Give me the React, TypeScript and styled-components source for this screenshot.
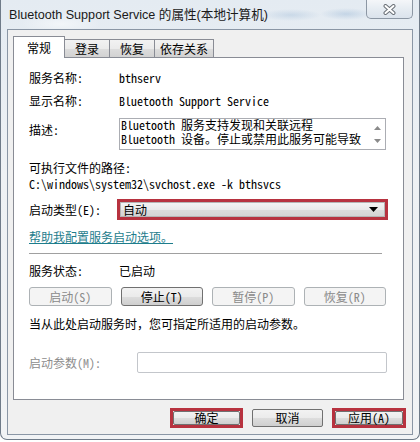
import styled, { createGlobalStyle } from 'styled-components';

const UI_FONT = `"Noto Sans Mono CJK SC", "Noto Sans CJK SC", "Liberation Mono", monospace`;
const TITLE_FONT = `"Liberation Sans", "Noto Sans CJK SC", sans-serif`;
const RED = '#b7323f';

const GlobalStyle = createGlobalStyle`
  html, body {
    margin: 0;
    padding: 0;
    background: #ffffff;
  }
  body {
    font-family: ${UI_FONT};
    font-size: 12px;
    color: #000;
  }
`;

export default function App() {
  return (
    <>
      <GlobalStyle />
      <Window>
        <TitleBar>
          <Title>Bluetooth Support Service 的属性(本地计算机)</Title>
          <CloseButton>
            <svg width="13" height="11" viewBox="0 0 13 11">
              <path d="M2.5 2 L10.5 9 M10.5 2 L2.5 9" stroke="#6b7178" strokeWidth="4" strokeLinecap="round" />
              <path d="M2.5 2 L10.5 9 M10.5 2 L2.5 9" stroke="#ffffff" strokeWidth="2" strokeLinecap="round" />
            </svg>
          </CloseButton>
        </TitleBar>

        <Client>
          <TabRow>
            <Tab $active>常规</Tab>
            <Tab>登录</Tab>
            <Tab>恢复</Tab>
            <Tab>依存关系</Tab>
          </TabRow>

          <Panel>
            <Row>
              <Label>服务名称:</Label>
              <span>bthserv</span>
            </Row>
            <Row $gap={7}>
              <Label>显示名称:</Label>
              <span>Bluetooth Support Service</span>
            </Row>
            <DescRow>
              <Label $top={4}>描述:</Label>
              <DescBox>
                <DescText>
                  <div>Bluetooth 服务支持发现和关联远程</div>
                  <div>Bluetooth 设备。停止或禁用此服务可能导致</div>
                </DescText>
                <ScrollBar>
                  <Arrow viewBox="0 0 7 4" width="7" height="4">
                    <path d="M0 4 L3.5 0 L7 4 Z" fill="#8a8a8a" />
                  </Arrow>
                  <Arrow viewBox="0 0 7 4" width="7" height="4">
                    <path d="M0 0 L7 0 L3.5 4 Z" fill="#8a8a8a" />
                  </Arrow>
                </ScrollBar>
              </DescBox>
            </DescRow>
            <Line $gap={10}>可执行文件的路径:</Line>
            <Line>C:\windows\system32\svchost.exe -k bthsvcs</Line>
            <Row $gap={7}>
              <Label $w={88}>启动类型(E):</Label>
              <SelectFrame>
                <Select>
                  <span>自动</span>
                  <svg width="9" height="5" viewBox="0 0 9 5">
                    <path d="M0 0 L9 0 L4.5 5 Z" fill="#000" />
                  </svg>
                </Select>
              </SelectFrame>
            </Row>
            <HelpLink href="#">帮助我配置服务启动选项。</HelpLink>
            <Separator />
            <Row $gap={9}>
              <Label>服务状态:</Label>
              <span>已启动</span>
            </Row>
            <ServiceButtons>
              <PanelButton disabled>启动(S)</PanelButton>
              <PanelButton>停止(T)</PanelButton>
              <PanelButton disabled>暂停(P)</PanelButton>
              <PanelButton disabled>恢复(R)</PanelButton>
            </ServiceButtons>
            <Line $gap={10}>当从此处启动服务时，您可指定所适用的启动参数。</Line>
            <Row $gap={20}>
              <Label $w={108} $disabled>启动参数(M):</Label>
              <ParamInput />
            </Row>
          </Panel>

          <Footer>
            <Highlight>
              <FooterButton $w={67} $h={14}>确定</FooterButton>
            </Highlight>
            <FooterButton $w={71} $h={18}>取消</FooterButton>
            <Highlight>
              <FooterButton $w={68} $h={14}>应用(A)</FooterButton>
            </Highlight>
          </Footer>
        </Client>
      </Window>
    </>
  );
}

const Window = styled.div`
  box-sizing: border-box;
  width: 420px;
  height: 440px;
  border: 1px solid #6f7b89;
  border-top: none;
  border-radius: 0 0 7px 7px;
  background: linear-gradient(180deg, #e4ebf2 0%, #eef1f4 40%, #f1f3f5 100%);
  display: flex;
  flex-direction: column;
`;

const TitleBar = styled.div`
  height: 29px;
  flex: none;
  display: flex;
  justify-content: space-between;
  align-items: flex-start;
  padding-left: 8px;
  background:
    radial-gradient(ellipse 30px 6px at 290px 15px, rgba(120, 160, 200, 0.25), transparent),
    radial-gradient(ellipse 26px 6px at 345px 14px, rgba(120, 160, 200, 0.3), transparent),
    radial-gradient(ellipse 40px 10px at 60px 24px, rgba(255, 255, 255, 0.5), transparent);
`;

const Title = styled.div`
  font-family: ${TITLE_FONT};
  font-size: 12.6px;
  line-height: 30px;
  color: #1a1a1a;
  white-space: nowrap;
`;

const CloseButton = styled.div`
  box-sizing: border-box;
  width: 47px;
  height: 19px;
  margin-right: 6px;
  border: 1px solid #8c97a4;
  border-top: none;
  border-radius: 0 0 5px 5px;
  background: linear-gradient(180deg, #f4f6f9 0%, #e6ecf2 50%, #dbe3ec 100%);
  display: flex;
  align-items: center;
  justify-content: center;
`;

const Client = styled.div`
  flex: 1;
  margin: 0 6px 4px 6px;
  border: 1px solid #8a96a5;
  background: #f0f0f0;
  padding: 6px 8px 0 5px;
  display: flex;
  flex-direction: column;
`;

const TabRow = styled.div`
  display: flex;
  align-items: flex-end;
  height: 22px;
  margin-bottom: -1px;
  position: relative;
  z-index: 1;
`;

const Tab = styled.div<{ $active?: boolean }>`
  box-sizing: border-box;
  height: ${(p) => (p.$active ? 22 : 19)}px;
  min-width: ${(p) => (p.$active ? 52 : 46)}px;
  padding: 0 5px;
  border: 1px solid #898c95;
  border-bottom: ${(p) => (p.$active ? 'none' : '1px solid #898c95')};
  background: ${(p) =>
    p.$active ? '#ffffff' : 'linear-gradient(180deg, #f2f2f2 0%, #ebebeb 50%, #dddddd 51%, #d2d2d2 100%)'};
  display: flex;
  align-items: center;
  justify-content: center;
  & + & {
    margin-left: -1px;
  }
`;

const Panel = styled.div`
  box-sizing: border-box;
  height: 343px;
  flex: none;
  background: #ffffff;
  border: 1px solid #898c95;
  padding: 12px 17px 0 15px;
  display: flex;
  flex-direction: column;
  line-height: 16px;
`;

const Row = styled.div<{ $gap?: number }>`
  display: flex;
  align-items: center;
  margin-top: ${(p) => p.$gap ?? 0}px;
  white-space: nowrap;
`;

const Label = styled.div<{ $w?: number; $top?: number; $disabled?: boolean }>`
  width: ${(p) => p.$w ?? 90}px;
  flex: none;
  margin-top: ${(p) => p.$top ?? 0}px;
  color: ${(p) => (p.$disabled ? '#8d8d8d' : '#000')};
`;

const Line = styled.div<{ $gap?: number }>`
  margin-top: ${(p) => p.$gap ?? 0}px;
  white-space: nowrap;
`;

const DescRow = styled.div`
  display: flex;
  align-items: flex-start;
  margin-top: 9px;
`;

const DescBox = styled.div`
  box-sizing: border-box;
  flex: 1;
  height: 32px;
  border: 1px solid #abadb3;
  display: flex;
`;

const DescText = styled.div`
  flex: 1;
  margin-top: -1px;
  padding: 0 0 0 1px;
  line-height: 14px;
  white-space: nowrap;
`;

const ScrollBar = styled.div`
  width: 16px;
  flex: none;
  display: flex;
  flex-direction: column;
  justify-content: space-between;
  align-items: center;
  padding: 7px 0 6px;
  box-sizing: border-box;
`;

const Arrow = styled.svg`
  display: block;
`;

const SelectFrame = styled.div`
  flex: 1;
  margin-right: -2px;
  border: 3px solid ${RED};
`;

const Select = styled.div`
  box-sizing: border-box;
  height: 15px;
  border: 1px solid #b5b5b5;
  background: linear-gradient(180deg, #f3f3f3 0%, #e9e9e9 50%, #dcdcdc 51%, #d4d4d4 100%);
  display: flex;
  align-items: center;
  justify-content: space-between;
  padding: 0 6px 0 2px;
  line-height: 13px;
`;

const HelpLink = styled.a`
  margin-top: 9px;
  align-self: flex-start;
  color: #1e7d8c;
  text-decoration: underline;
`;

const Separator = styled.div`
  height: 1px;
  margin: 8px 4px 0 0;
  background: #a0a0a0;
`;

const ServiceButtons = styled.div`
  display: grid;
  grid-template-columns: repeat(4, 1fr);
  gap: 9px;
  margin-top: 8px;
`;

const PanelButton = styled.button`
  box-sizing: border-box;
  height: 19px;
  padding: 0;
  font: inherit;
  line-height: 16px;
  border: 1px solid #707070;
  border-radius: 3px;
  color: #000;
  background: linear-gradient(180deg, #f2f2f2 0%, #ebebeb 50%, #dddddd 51%, #cfcfcf 100%);
  &:disabled {
    color: #8a8a8a;
    border-color: #adb2b5;
    background: #f4f4f4;
  }
`;

const ParamInput = styled.div`
  box-sizing: border-box;
  flex: 1;
  height: 21px;
  margin-right: -1px;
  border: 1px solid #c3c6cb;
  border-radius: 2px;
  background: #fff;
`;

const Footer = styled.div`
  display: flex;
  justify-content: flex-end;
  align-items: center;
  gap: 9px;
  padding-top: 8px;
  margin-right: -2px;
`;

const Highlight = styled.div`
  border: 3px solid ${RED};
  display: flex;
`;

const FooterButton = styled.button<{ $w: number; $h: number }>`
  box-sizing: border-box;
  width: ${(p) => p.$w}px;
  height: ${(p) => p.$h}px;
  padding: 0;
  font: inherit;
  line-height: 12px;
  color: #000;
  border: 1px solid #707070;
  border-radius: 2px;
  background: linear-gradient(180deg, #f2f2f2 0%, #ebebeb 50%, #dddddd 51%, #cfcfcf 100%);
`;
